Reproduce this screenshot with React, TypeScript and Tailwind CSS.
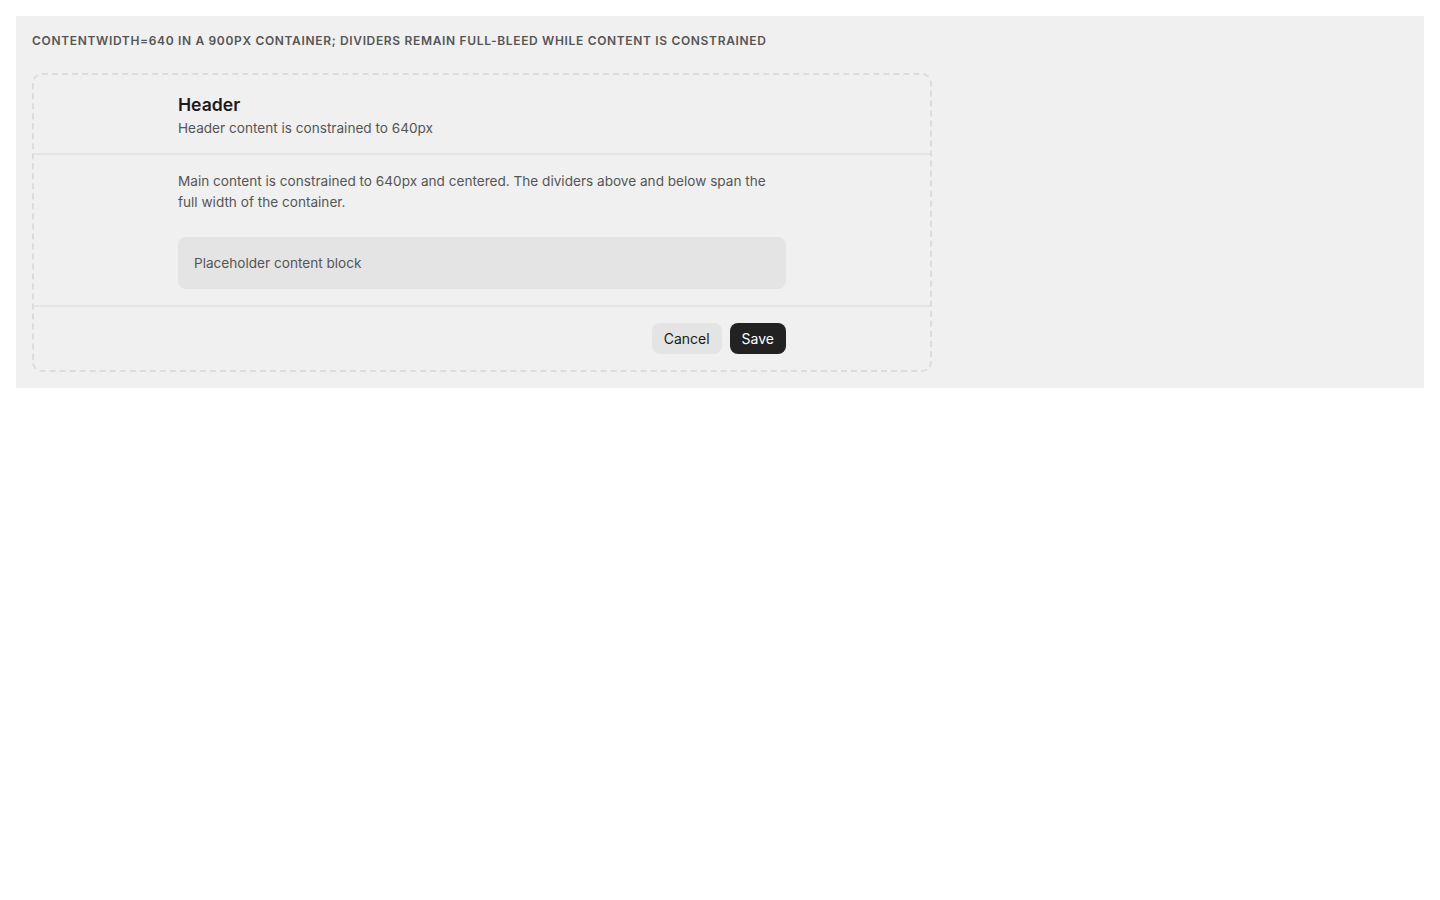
export default function App() {
  return (
    <div className="min-h-screen bg-white p-4" style={{ fontFamily: "Inter, 'Noto Sans', sans-serif" }}>
      <div className="bg-[#f0f0f0] p-4">
        {/* Caption */}
        <p className="mb-6 text-xs leading-[17px] font-semibold uppercase tracking-[0.055em] text-[#555]">
          contentWidth=640 in a 900px container; dividers remain full-bleed while content is constrained
        </p>

        {/* Frame */}
        <div className="w-[900px] rounded-[10px] border-2 border-dashed border-[#dcdcdc]">
          {/* Header */}
          <div className="border-b-2 border-[#e4e4e4]">
            <div className="mx-auto max-w-[640px] px-4 pt-[17px] pb-[15px]">
              <h2 className="text-[17.6px] leading-[26px] font-semibold text-[#1a1a1a]">Header</h2>
              <p className="text-[13.6px] leading-5 text-[#555]">Header content is constrained to 640px</p>
            </div>
          </div>

          {/* Body */}
          <div className="border-b-2 border-[#e4e4e4]">
            <div className="mx-auto max-w-[640px] px-4 py-4">
              <p className="text-[13.6px] leading-[21px] text-[#555]">
                Main content is constrained to 640px and centered. The dividers above and below span the full width of the container.
              </p>
              <div className="mt-6 rounded-lg bg-[#e4e4e4] p-4 text-[13.6px] leading-5 text-[#555]">
                Placeholder content block
              </div>
            </div>
          </div>

          {/* Footer */}
          <div className="mx-auto flex max-w-[640px] justify-end gap-2 px-4 py-4">
            <button className="h-[31px] rounded-lg bg-[#e4e4e4] px-3 text-sm text-[#1a1a1a]">Cancel</button>
            <button className="h-[31px] rounded-lg bg-[#222] px-3 text-sm text-white">Save</button>
          </div>
        </div>
      </div>
    </div>
  );
}
